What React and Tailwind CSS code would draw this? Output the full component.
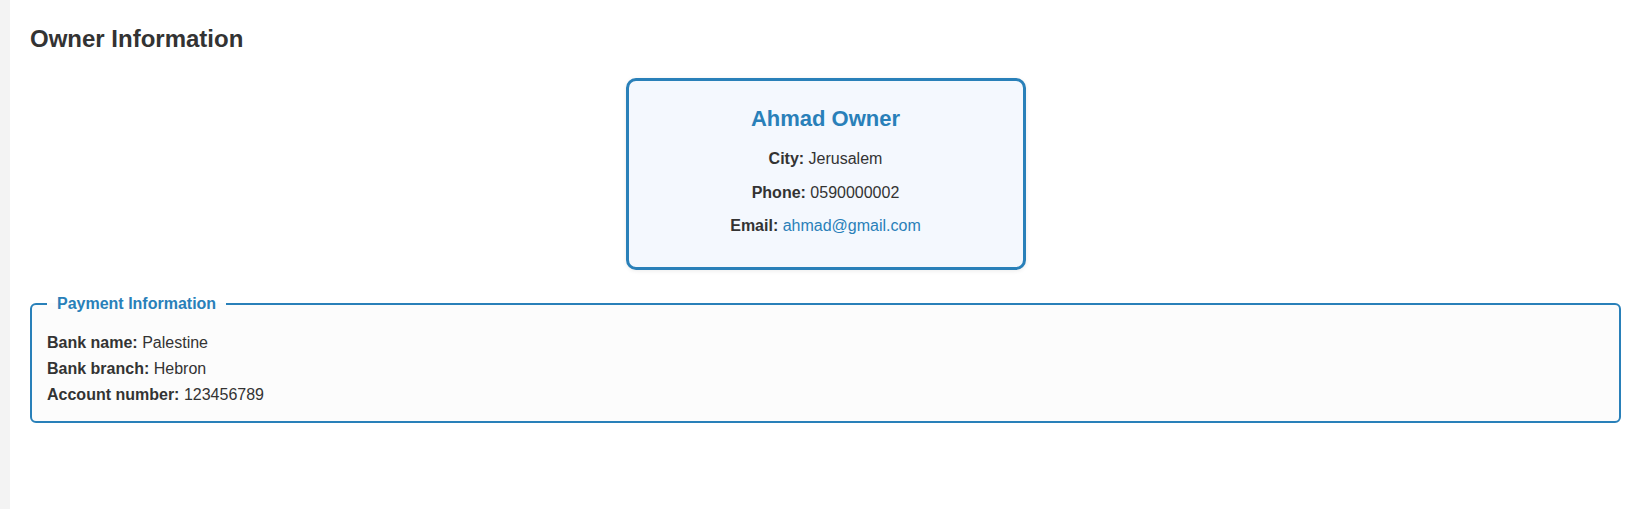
import React from 'react';

const owner = {
    name: 'Ahmad Owner',
    city: 'Jerusalem',
    phone: '0590000002',
    email: 'ahmad@gmail.com',
};

const payment = [
    { label: 'Bank name:', value: 'Palestine' },
    { label: 'Bank branch:', value: 'Hebron' },
    { label: 'Account number:', value: '123456789' },
];

const App = () => {
    return (
        <div className="flex min-h-screen font-['Liberation_Sans',Arial,sans-serif] text-[#333] leading-[1.6]">
            {/* side strip */}
            <div className="w-[10px] shrink-0 bg-[#f3f3f3]" />

            <main className="flex-1 bg-white px-5 pt-5 pb-5">
                <h2 className="text-[24px] font-bold leading-[1.6] m-0">Owner Information</h2>

                {/* Owner card */}
                <div className="flex justify-center mt-[19.6px]">
                    <div className="w-[400px] border-[3px] border-[#2980b9] rounded-[10px] bg-[#f4f8fe] shadow-[0_1px_4px_rgba(0,0,0,0.08)] pt-[25px] pb-[28px] flex flex-col items-center text-[16px]">
                        <h3 className="text-[22px] font-bold text-[#2980b9] leading-[25px] m-0">{owner.name}</h3>
                        <div className="flex flex-col items-center gap-2 mt-[15px]">
                            <p><span className="font-bold">City:</span> {owner.city}</p>
                            <p><span className="font-bold">Phone:</span> {owner.phone}</p>
                            <p>
                                <span className="font-bold">Email:</span>{' '}
                                <a href="#" className="text-[#2980b9]">{owner.email}</a>
                            </p>
                        </div>
                    </div>
                </div>

                {/* Payment */}
                <fieldset className="mt-[21px] border-2 border-[#2980b9] rounded-[6px] bg-[#fcfcfc] px-[15px] pt-[14px] pb-[14px] min-w-0">
                    <legend className="px-[10px] text-[16px] font-bold text-[#2980b9]">Payment Information</legend>
                    {payment.map(row => (
                        <div key={row.label} className="text-[16px]">
                            <span className="font-bold">{row.label}</span> {row.value}
                        </div>
                    ))}
                </fieldset>
            </main>
        </div>
    );
};

export default App;
